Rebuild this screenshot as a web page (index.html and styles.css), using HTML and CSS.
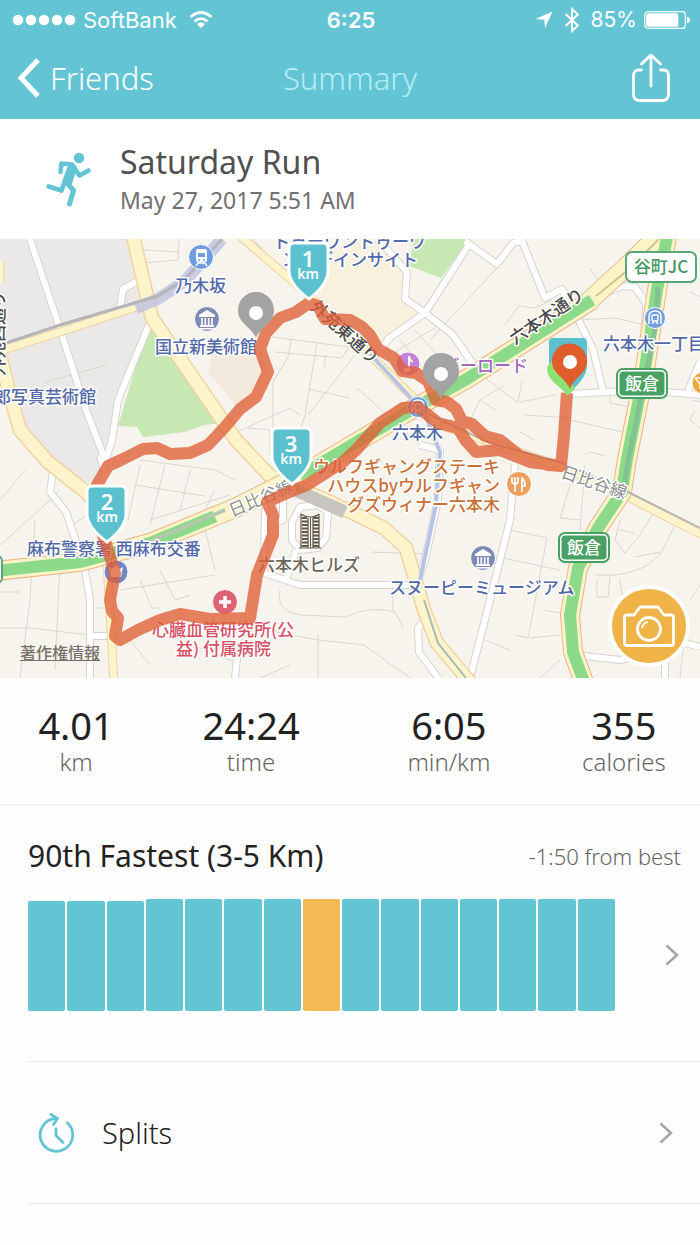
FILE: index.html
```html
<!DOCTYPE html>
<html lang="en">
<head>
    <meta charset="UTF-8">
    <meta name="viewport" content="width=device-width, initial-scale=1.0">
    <title>Summary - Saturday Run</title>
    <link rel="stylesheet" href="styles.css">
</head>
<body>
    <header>
        <div class="status-bar">
            <div class="status-left">
                <svg width="64" height="12" viewBox="0 0 64 12" fill="#fff">
                    <circle cx="6" cy="6" r="5.3"/><circle cx="19" cy="6" r="5.3"/><circle cx="32" cy="6" r="5.3"/><circle cx="45" cy="6" r="5.3"/><circle cx="58" cy="6" r="5.3"/>
                </svg>
                <span>SoftBank</span>
                <svg class="wifi" width="24" height="18" viewBox="0 0 24 18" fill="none" stroke="#fff" stroke-width="2.8">
                    <path d="M1.5 6 Q12 -3 22.5 6"/>
                    <path d="M5.5 10.5 Q12 4.8 18.5 10.5"/>
                    <path d="M8 13 Q12 9.6 16 13 L12 17.2 Z" fill="#fff" stroke="none"/>
                </svg>
            </div>
            <div class="clock">6:25</div>
            <div class="status-right">
                <svg width="18" height="18" viewBox="0 0 18 18" fill="#fff"><path d="M17.5 0.5 L10 17 L9.3 8.7 L0.5 8 Z"/></svg>
                <svg class="bluetooth" width="16" height="26" viewBox="0 0 16 26" fill="none" stroke="#fff" stroke-width="2"><path d="M1.5 7 L14 18.5 L8 24 V2 L14 7.5 L1.5 19"/></svg>
                <span>85%</span>
                <svg width="46" height="18" viewBox="0 0 46 18">
                    <rect x="0.7" y="0.7" width="40.6" height="16.6" rx="3" fill="none" stroke="#fff" stroke-width="1.2"/>
                    <rect x="2.2" y="2.2" width="32" height="13.6" rx="1.5" fill="#fff"/>
                    <path d="M43 5.8 Q46 6.5 46 9 Q46 11.5 43 12.2 Z" fill="#fff"/>
                </svg>
            </div>
        </div>
        <nav class="nav-bar">
            <a class="back" href="#friends">
                <svg width="26" height="40" viewBox="0 0 26 40" fill="none" stroke="#fff" stroke-width="5"><path d="M24 2 L7 20 L24 38"/></svg>
                Friends
            </a>
            <h1>Summary</h1>
            <button class="share" type="button" aria-label="Share">
                <svg width="38" height="50" viewBox="0 0 38 50" fill="none" stroke="#fff" stroke-width="2.8" stroke-linecap="round" stroke-linejoin="round">
                    <path d="M9.5 17 H7 Q1.5 17 1.5 22.5 V41 Q1.5 47.5 8 47.5 H30 Q36.5 47.5 36.5 41 V22.5 Q36.5 17 31 17 H28.5"/>
                    <path d="M19 33 V2.5 M9.5 11 L19 2 L28.5 11"/>
                </svg>
            </button>
        </nav>
    </header>

    <main>
        <section class="run-title">
            <svg width="46" height="56" viewBox="0 0 46 56" fill="none" stroke="#63c5d4" stroke-linecap="round" stroke-linejoin="round">
                <circle cx="33" cy="6" r="5.2" fill="#63c5d4" stroke="none"/>
                <path d="M25 14 L28 16 L23 31 L19 30 Z" fill="#63c5d4" stroke-width="6"/>
                <path d="M14.5 20 L15.5 11.5 L26 12.5 L33.5 23.5 L42.5 18.5" stroke-width="4.6"/>
                <path d="M19 29 L15.5 38.5 L2.8 34.5" stroke-width="4.8"/>
                <path d="M21 31 L27.5 38.5 L23.5 52" stroke-width="5"/>
            </svg>
            <div>
                <h2>Saturday Run</h2>
                <p>May 27, 2017 5:51 AM</p>
            </div>
        </section>

        <section class="map">
            <svg class="map-canvas" viewBox="0 239 700 439">
                <rect y="239" width="700" height="439" fill="#f7f4ee"/>
                <!-- areas -->
                <path d="M0 239 H130 L152 318 L118 400 L110 455 L96 488 L60 464 L22 430 L0 345 Z" fill="#ebe9e8"/>
                <path d="M148 325 L154 322 L222 423 L205 425 L185 432 L143 437 L137 427 L118 426 Z" fill="#c8e8b3"/>
                <path d="M212 352 L262 352 L268 375 L240 410 L208 372 Z" fill="#f4e9dd"/>
                <path d="M318 300 L332 252 L360 239 H380 L407 268 L405 300 L422 314 L386 342 Z" fill="#f7f1dd"/>
                <path d="M414 239 H470 L441 278 L409 266 Z" fill="#c8e8b3"/>
                <!-- minor streets -->
                <path class="street" d="M43 383 L106 365 M143 250 L179 252 M143 263 L178 260 L179 239 M272 337 L349 347 L342 358 L275 352 M291 340 L288 357 L273 382 V440 M317 343 L305 415 L298 436 M325 355 V368 M230 435 L290 408 L300 415 M248 428 L270 430 V455 M308 389 L350 398 M357 388 L420 445 M355 355 L308 415 M400 340 L425 370 M415 330 L440 358 M395 352 L435 328"/>
                <path class="street" d="M140 460 L215 470 L235 480 M135 485 L205 496 M140 465 L128 520 M165 465 L150 525 M190 470 L180 510 M215 490 L200 520 M0 500 L25 470 M0 545 L45 505 L60 490 M35 520 L30 600 L20 678 M60 560 L55 670 M0 628 L30 628 L90 635 M0 592 L20 592 M72 525 L110 500 M120 590 L215 575 M140 580 L152 608 L160 608 M160 570 L175 600 L190 595 M150 520 L230 495 M205 530 L215 570 M180 640 L235 662 M130 640 L150 665 M95 608 H110"/>
                <path class="street" d="M280 590 Q275 610 300 615 L345 617 Q370 605 395 612 L403 627 M393 595 V612 M255 628 L318 640 L364 645 L410 678 M318 635 V678 M290 665 L260 678 M372 552 L425 554"/>
                <path class="street" d="M430 340 L497 268 M465 430 L480 400 L505 385 M475 370 L518 403 L522 380 M480 400 L495 410 M520 402 L555 395 M525 415 L570 418 M570 420 L640 436 M520 432 L535 440 M505 325 L519 306 L535 308 L552 300 M590 268 L598 280 M578 320 L615 318 L645 325 M610 395 V403 L645 410 M585 455 L590 452 L605 456 M690 292 L700 297 M692 400 L700 402 M695 410 L690 420 L700 428"/>
                <path class="street" d="M510 530 L547 538 L528 638 L515 635 M503 558 L560 570 M543 610 L560 613 M575 470 L560 518 L580 520 M585 465 L580 530 M620 520 L615 540 L625 553 L640 535 L655 510 M620 530 L635 533 M595 575 L615 575 Q655 570 665 545 L675 525 M597 580 V597 H608 L610 577 M620 580 L622 595 M635 557 L660 552 M530 638 L560 635 M485 640 L510 650 M690 600 L700 585 M685 630 L680 678 M540 678 L560 660 M650 660 L630 655"/>
                <!-- white roads -->
                <g class="road-edge">
                    <path id="w1" d="M30 239 L62 335 L86 410 L106 462 M150 322 L118 400 L112 440 L105 462 M138 281 L123 289 L120 309"/>
                    <path id="w2" d="M53 472 L50 492 L66 512 L84 565 L90 600 V678 M91 636 H110 M100 455 L104 470 M247 239 L262 254"/>
                    <path id="w3" d="M378 239 L407 272 L405 299 L425 313 L470 243 M425 313 L388 339 L380 352 M425 313 L452 334 L472 362"/>
                    <path id="w4" d="M465 241 L497 264 L513 243 L522 241 L545 298 L562 289 L578 319 L593 349 L603 391 M570 394 L645 390 L700 395 M600 295 L622 286 L635 287 L646 303 L644 360 M688 391 L700 362 M460 345 L470 360"/>
                    <path id="w5" d="M265 505 L264 573 L300 585 H420 M283 500 V520 L276 522 M292 522 L300 507 L318 505 L328 512 L326 538 L318 548 L300 550 L292 540 Z M296 550 L286 580"/>
                    <path id="w6" d="M515 465 L510 520 L490 600 L470 678 M440 448 L438 500 L425 560 L418 580 M423 622 L418 628 L419 652 L438 678 M575 655 L620 660 L645 654 M665 662 V678 M685 643 L700 647 M420 445 L440 450 M240 630 L235 678"/>
                </g>
                <g class="road-fill">
                    <use href="#w1"/><use href="#w2"/><use href="#w3"/><use href="#w4"/><use href="#w5"/><use href="#w6"/>
                </g>
                <!-- yellow roads -->
                <g class="avenue-edge">
                    <path id="y1" d="M133 236 L152 318 L236 440 L270 476 L330 502 L384 528 L406 548 L424 610 L437 643 L470 682 M-4 340 L10 395 L20 430 L48 462 L86 492 L100 508"/>
                </g>
                <g class="lane-edge">
                    <path id="y2" d="M-4 352 L60 332 L148 303 M240 236 L310 296 L424 408 L440 425 L560 466 L630 498 L704 536 M100 508 L106 545 L114 682 M0 262 V282"/>
                </g>
                <g class="avenue-fill"><use href="#y1"/></g>
                <g class="lane-fill"><use href="#y2"/></g>
                <!-- expressways -->
                <g fill="none" stroke="#edb487" stroke-width="20">
                    <path id="g1" d="M-4 571 L80 562 L150 543 L235 508 L310 470 L404 414 L465 380 L592 300"/>
                    <path id="g2" d="M668 232 L657 290 L645 369 L627 459 L622 492 L598 528 L578 568 L570 615 L573 652 L584 682"/>
                    <path id="g3" d="M588 302 L625 268 L662 232"/>
                </g>
                <g fill="none" stroke="#fbf4c9" stroke-width="18"><use href="#g1"/><use href="#g2"/><use href="#g3"/></g>
                <g fill="none" stroke="#8dd98a" stroke-width="12"><use href="#g1"/><use href="#g2"/></g>
                <path d="M596 296 L628 270 L664 234" fill="none" stroke="#c9c88c" stroke-width="2"/>
                <path d="M215 517 L300 476" stroke="#fbf4c9" stroke-width="17"/>
                <path d="M130 550 L225 510" stroke="#b3c9ae" stroke-width="4"/>
                <!-- rail lines -->
                <path d="M136 308 L158 299 L184 282 L222 239" fill="none" stroke="#b9bce0" stroke-width="12" opacity="0.75"/>
                <path d="M0 345 L60 325 L158 296 L184 280 L222 239" fill="none" stroke="#b5b5b8" stroke-width="3"/>
                <path d="M370 354 L424 412 L440 452 L436 505 L420 580" fill="none" stroke="#b4c3e6" stroke-width="4"/>
                <path d="M293 489 L345 512" stroke="#c8c5c0" stroke-width="13"/>
                <path d="M424 412 L490 443 L560 462 L630 493 L704 530" fill="none" stroke="#b5b5b5" stroke-width="2"/>
                <path d="M424 600 L438 643 L466 678" fill="none" stroke="#a9b8b5" stroke-width="2"/>
                <path d="M658 287 L655 330 L628 462 L624 488" fill="none" stroke="#78aa9b" stroke-width="5" opacity="0.5"/>

                <!-- place labels -->
                <g class="label blue">
                    <text x="273" y="248">トゥーワントゥーワ</text>
                    <text x="282" y="266">ン・デインサイト</text>
                    <text x="175" y="292">乃木坂</text>
                    <text x="155" y="353">国立新美術館</text>
                    <text x="-6" y="403">郎写真芸術館</text>
                    <text x="27" y="555">麻布警察署 西麻布交番</text>
                    <text x="392" y="439">六本木</text>
                    <text x="603" y="350">六本木一丁目</text>
                    <text x="389" y="594">スヌーピーミュージアム</text>
                </g>
                <text class="label violet" x="426" y="372">アビーロード</text>
                <g class="label orange">
                    <text x="500" y="473" text-anchor="end">ウルフギャングステーキ</text>
                    <text x="500" y="492" text-anchor="end">ハウスbyウルフギャン</text>
                    <text x="500" y="511" text-anchor="end">グズウィナー六本木</text>
                </g>
                <g class="label red">
                    <text x="152" y="636">心臓血管研究所(公</text>
                    <text x="176" y="655">益) 付属病院</text>
                </g>
                <text class="label brown" x="258" y="571">六本木ヒルズ</text>
                <g class="label street-name">
                    <text transform="translate(309 308) rotate(42)">外苑東通り</text>
                    <text transform="translate(515 345) rotate(-34)">六本木通り</text>
                    <text transform="translate(4 376) rotate(-90)">外苑西通り</text>
                </g>
                <g class="label rail-name">
                    <text transform="translate(232 517) rotate(-23)">日比谷線</text>
                    <text transform="translate(560 477) rotate(19)">日比谷線</text>
                </g>

                <!-- place icons -->
                <g stroke="#fff" stroke-width="1">
                    <circle cx="201" cy="257" r="12.5" fill="#709de0"/>
                    <circle cx="207" cy="319" r="12.5" fill="#7f8bb5"/>
                    <circle cx="483" cy="558" r="12.5" fill="#7f8bb5"/>
                    <circle cx="655" cy="318" r="10.5" fill="#709de0"/>
                    <circle cx="418" cy="407" r="10.5" fill="#709de0"/>
                    <circle cx="408" cy="364" r="12" fill="#c482d4"/>
                    <circle cx="116" cy="572" r="12" fill="#7187c2"/>
                    <circle cx="519" cy="484" r="12.5" fill="#ed9f5d"/>
                    <circle cx="225" cy="602" r="12.5" fill="#dc6474"/>
                    <circle cx="703" cy="383" r="11" fill="#eda63f"/>
                </g>
                <rect x="196" y="249" width="11" height="13" rx="2" fill="#fff"/>
                <path d="M196 266 L198 263 H205 L207 266" fill="none" stroke="#fff" stroke-width="1.5"/>
                <path d="M198 253 H205 V257 H198 Z" fill="#709de0"/>
                <circle cx="199" cy="260" r="1" fill="#709de0"/><circle cx="204" cy="260" r="1" fill="#709de0"/>
                <g id="museum" fill="#fff"><path d="M199 315 L207 310 L215 315 V317 H199 Z M200 325 H214 V327 H200 Z M198.5 328 H215.5 V329.5 H198.5 Z"/><path d="M202 318 V325 M205.3 318 V325 M208.7 318 V325 M212 318 V325" stroke="#fff" stroke-width="1.6"/></g>
                <use href="#museum" x="276" y="239"/>
                <g id="metro" fill="none" stroke="#fff" stroke-width="1.5"><path d="M649 324 V317 Q649 311 655 311 Q661 311 661 317 V324"/><rect x="652" y="315" width="6" height="6" rx="1"/><path d="M652 324 L654 321.5 M658 324 L656 321.5"/></g>
                <use href="#metro" x="-237" y="89"/>
                <path d="M409 370 V356 Q410 361 413 362" fill="none" stroke="#fff" stroke-width="1.8"/><ellipse cx="406.5" cy="370" rx="3" ry="2.3" fill="#fff"/>
                <path d="M109 567 L112 569 L116 565 L120 569 L123 567 L121 577 H111 Z" fill="#fff"/>
                <path d="M512 477 V481 Q512 484 515 484 Q518 484 518 481 V477 M515 477 V492 M522 492 V478 Q525 480 525 486 H522" fill="none" stroke="#fff" stroke-width="1.7"/>
                <path d="M225 596 V608 M219 602 H231" stroke="#fff" stroke-width="3.5"/>
                <path d="M695 378 L700 384 V389 M695 378 H700" stroke="#fff" stroke-width="1.5" fill="none"/>
                <!-- tower -->
                <g stroke="#5e594a" fill="none">
                    <path d="M301 514 Q305 517 310 517 Q316 517 319 514 M301 514 V548 M319 514 V548 M308 518 V548 M313 518 V548 M299 548 H321" stroke-width="1.2"/>
                    <path d="M302 518 H307 M302 521.5 H308 M302 525 H308 M302 528.5 H308 M302 532 H308 M302 535.5 H308 M302 539 H308 M302 542.5 H308 M302 546 H308 M313 518 H319 M313 521.5 H319 M313 525 H319 M313 528.5 H319 M313 532 H319 M313 535.5 H319 M313 539 H319 M313 542.5 H319 M313 546 H319" stroke-width="1.8"/>
                    <path d="M310.5 518 V548" stroke-width="1"/>
                </g>

                <!-- road signs -->
                <rect x="626" y="252" width="70" height="30" rx="6" fill="#fff" stroke="#5aa577" stroke-width="2"/>
                <text class="sign green-text" x="661" y="273" text-anchor="middle">谷町JC</text>
                <g id="exit">
                    <rect x="617" y="369" width="50" height="29" rx="6" fill="#fff" stroke="#48a163" stroke-width="2"/>
                    <rect x="619.5" y="371.5" width="45" height="24" rx="4" fill="#48a163"/>
                    <text class="sign" x="642" y="390" text-anchor="middle">飯倉</text>
                </g>
                <use href="#exit" x="-58" y="164"/>
                <rect x="-20" y="556" width="22" height="27" rx="5" fill="#fff" stroke="#5aa577" stroke-width="2"/>

                <!-- run route -->
                <path class="route" d="M567 393 L564 435 L561 466 L548 465 L520 456 L500 440 L485 436 L472 424 L462 421 L456 409 L447 402 L436 400 L428 381 L416 373 L402 371 L394 358 L378 349 L370 335 L362 327 L350 320 L325 319 L318 306 L309 303 L296 312 L280 318 L266 333 L260 349 L268 372 L256 397 L240 409 L225 427 L208 445 L190 453 L170 454 L157 448 L143 449 L123 459 L108 466 L97 485 L98 520 L108 550 L115 573 L110 600 L112 611 L118 618 L115 636 L120 640 L138 630 L160 620 L180 614 L210 619 L250 618 L257 575 L273 535 L273 515 L267 502 L287 493 L307 485 L343 462 L357 449 L380 423 L403 408 L418 407 L438 423 L458 428 L466 441 L476 452 L500 450 L530 462 L561 466"/>

                <!-- stop pins -->
                <g id="stop"><path d="M256 338 C251 326 238 324 238 310 A18 18 0 0 1 274 310 C274 324 261 326 256 338 Z" fill="#a3a3a3"/><circle cx="256" cy="313" r="7" fill="#fff"/></g>
                <use href="#stop" x="185" y="61"/>
                <!-- kilometer pins -->
                <g fill="#5cc1cf" stroke="#fff" stroke-width="3">
                    <path id="shield" d="M294 243 H323 Q328 243 328 248 V272 Q327 285 309 299 Q290 285 289 272 V248 Q289 243 294 243 Z"/>
                    <use href="#shield" x="-202" y="243"/>
                    <use href="#shield" x="-17" y="185"/>
                </g>
                <g class="km-number">
                    <text x="308" y="267">1</text><text x="107" y="510">2</text><text x="291" y="452">3</text>
                </g>
                <g class="km-unit">
                    <text x="308" y="279">km</text><text x="107" y="522">km</text><text x="291" y="464">km</text>
                </g>
                <!-- start and finish -->
                <path d="M553 338 H583 Q587 338 587 342 V366 Q586 380 567 394 Q550 380 549 366 V342 Q549 338 553 338 Z" fill="#5cc1cf"/>
                <path d="M567 396 C562 385 547 383 547 367 L556 356 L575 389 Z" fill="#8de171"/>
                <path d="M570 389 C565 377 552 374 552 361 A17.5 17.5 0 0 1 587 361 C587 374 574 377 570 389 Z" fill="#e05c2b"/>
                <circle cx="570" cy="362" r="7" fill="#fff"/>
            </svg>
            <a class="map-legal" href="#legal">著作権情報</a>
            <button class="camera" type="button" aria-label="Add photo">
                <svg width="52" height="44" viewBox="0 0 52 44" fill="none" stroke="#fff" stroke-width="2.8" stroke-linejoin="round">
                    <path d="M4 11 H11 L17 3 H35 L41 11 H48 Q50.5 11 50.5 13.5 V39 Q50.5 41.5 48 41.5 H4 Q1.5 41.5 1.5 39 V13.5 Q1.5 11 4 11 Z"/>
                    <circle cx="26" cy="25" r="11.5"/>
                    <path d="M19 24 Q20 18.5 25 18" stroke-width="2"/>
                </svg>
            </button>
        </section>

        <section class="stats">
            <div class="stat"><strong>4.01</strong><span>km</span></div>
            <div class="stat"><strong>24:24</strong><span>time</span></div>
            <div class="stat"><strong>6:05</strong><span>min/km</span></div>
            <div class="stat"><strong>355</strong><span>calories</span></div>
        </section>

        <section class="ranking">
            <div class="ranking-head">
                <h2>90th Fastest (3-5 Km)</h2>
                <span>-1:50 from best</span>
            </div>
            <a class="ranking-chart" href="#ranking" aria-label="See all runs">
                <div class="bars">
                    <i class="bar short"></i><i class="bar short"></i><i class="bar short"></i><i class="bar"></i><i class="bar"></i>
                    <i class="bar"></i><i class="bar"></i><i class="bar current"></i><i class="bar"></i><i class="bar"></i>
                    <i class="bar"></i><i class="bar"></i><i class="bar"></i><i class="bar"></i><i class="bar"></i>
                </div>
                <svg width="14" height="22" viewBox="0 0 14 22" fill="none" stroke="#a5a5a5" stroke-width="2.5"><path d="M1.5 1.5 L12 11 L1.5 20.5"/></svg>
            </a>
        </section>

        <a class="row" href="#splits">
            <svg width="36" height="40" viewBox="0 0 36 40" fill="none" stroke="#63c5d4" stroke-width="2.8" stroke-linecap="round" stroke-linejoin="round">
                <path d="M29.5 10 A16.3 16.3 0 1 1 17 5.7"/>
                <path d="M13 1.5 L19.5 5.5 L15.5 11.5"/>
                <path d="M18 16 V22.5 L25 29.5"/>
            </svg>
            <span>Splits</span>
            <svg width="14" height="22" viewBox="0 0 14 22" fill="none" stroke="#a5a5a5" stroke-width="2.5"><path d="M1.5 1.5 L12 11 L1.5 20.5"/></svg>
        </a>
    </main>
</body>
</html>
```
FILE: styles.css
```css
* {
    box-sizing: border-box;
}

body {
    margin: 0;
    font-family: "Noto Sans", "Open Sans", sans-serif;
    background-color: #fefefe;
    color: #222;
}

h1, h2, p {
    margin: 0;
    font-weight: 400;
}

a {
    color: inherit;
    text-decoration: none;
}

button {
    border: none;
    padding: 0;
    background: none;
    cursor: pointer;
}

svg {
    display: block;
    flex: none;
}

header {
    background-color: #63c5d4;
    color: white;
}

.status-bar {
    display: grid;
    grid-template-columns: 1fr auto 1fr;
    align-items: center;
    height: 39px;
    padding: 0 10px 0 12px;
    font-family: Inter, "Liberation Sans", sans-serif;
    font-size: 22px;
}

.status-left,
.status-right {
    display: flex;
    align-items: center;
    gap: 7px;
}

.status-left .wifi {
    margin-left: 5px;
}

.status-right {
    justify-content: flex-end;
}

.status-right span {
    font-size: 21px;
}

.status-right .bluetooth {
    margin: 0 4px;
}

.clock {
    font-weight: 600;
}

.nav-bar {
    display: grid;
    grid-template-columns: 1fr auto 1fr;
    align-items: center;
    height: 80px;
    padding: 0 14px 2px;
    font-size: 31px;
    font-weight: 300;
}

.back {
    display: flex;
    align-items: center;
    gap: 10px;
}

.nav-bar h1 {
    font-size: 31px;
    font-weight: 300;
    color: #b4edf5;
}

.share {
    justify-self: end;
    margin-right: 16px;
}

.run-title {
    display: flex;
    align-items: center;
    gap: 28px;
    height: 120px;
    padding: 2px 46px 0;
    background-color: white;
}

.run-title h2 {
    font-size: 32px;
    line-height: 40px;
    color: #505050;
}

.run-title p {
    font-size: 23px;
    line-height: 36px;
    color: #707070;
}

.map {
    position: relative;
}

.map-canvas {
    width: 100%;
    height: auto;
}

.street {
    fill: none;
    stroke: #d9d6d0;
    stroke-width: 1;
}

.road-edge,
.road-fill,
.avenue-edge,
.avenue-fill,
.lane-edge,
.lane-fill {
    fill: none;
    stroke-linejoin: round;
}

.road-edge {
    stroke: #d6d4d2;
    stroke-width: 8;
}

.road-fill {
    stroke: white;
    stroke-width: 6;
}

.avenue-edge {
    stroke: #f2d2a2;
    stroke-width: 15;
}

.avenue-fill {
    stroke: #fdf4cb;
    stroke-width: 12;
}

.lane-edge {
    stroke: #f2d2a2;
    stroke-width: 9;
}

.lane-fill {
    stroke: #fdf4cb;
    stroke-width: 7;
}

.label {
    font-family: "Noto Sans CJK JP", sans-serif;
    font-size: 17px;
    font-weight: 500;
    paint-order: stroke;
    stroke: white;
    stroke-width: 3px;
    stroke-linejoin: round;
}

.blue {
    fill: #5369a8;
}

.violet {
    fill: #a366b8;
}

.orange {
    fill: #c97036;
}

.red {
    fill: #d65065;
}

.brown {
    fill: #6b6658;
}

.street-name {
    fill: #4a4a4a;
}

.rail-name {
    font-weight: 400;
    fill: #8c8c8c;
}

.sign {
    font-family: "Noto Sans CJK JP", sans-serif;
    font-size: 17px;
    font-weight: 500;
    fill: white;
}

.green-text {
    fill: #43965f;
}

.route {
    fill: none;
    stroke: #df5f36;
    stroke-width: 12;
    stroke-linejoin: round;
    opacity: 0.78;
}

.km-number,
.km-unit {
    fill: white;
    font-weight: 600;
    text-anchor: middle;
}

.km-number {
    font-size: 22px;
}

.km-unit {
    font-size: 14px;
}

.map-legal {
    position: absolute;
    left: 20px;
    bottom: 14px;
    font-family: "Noto Sans CJK JP", sans-serif;
    font-size: 16px;
    font-weight: 500;
    line-height: 24px;
    color: #77736c;
    text-decoration: underline;
}

.camera {
    position: absolute;
    right: 10px;
    bottom: 11px;
    display: grid;
    place-items: center;
    width: 82px;
    height: 82px;
    border: 4px solid white;
    border-radius: 50%;
    background-color: #efb347;
}

.stats {
    display: grid;
    grid-template-columns: 10fr 13fr 13fr 10fr;
    padding: 24px 0 29px;
    border-bottom: 2px solid #f2f2f2;
    text-align: center;
}

.stat strong {
    display: block;
    font-size: 38px;
    font-weight: 400;
    line-height: 46px;
}

.stat span {
    display: block;
    font-size: 24px;
    font-weight: 300;
    line-height: 27px;
    color: #666;
}

.ranking {
    margin-left: 28px;
    padding: 30px 19px 50px 0;
    border-bottom: 1px solid #e8e8e8;
}

.ranking-head {
    display: flex;
    justify-content: space-between;
    align-items: center;
    line-height: 40px;
}

.ranking-head h2 {
    font-size: 30px;
}

.ranking-head span {
    font-size: 22px;
    font-weight: 300;
    color: #666;
}

.ranking-chart {
    display: flex;
    align-items: center;
    gap: 50px;
    margin-top: 23px;
    padding-right: 2px;
}

.bars {
    display: flex;
    flex: 1;
    align-items: flex-end;
    gap: 2px;
    height: 112px;
}

.bar {
    flex: 1;
    height: 100%;
    border-radius: 2px;
    background-color: #63c5d4;
}

.bar.short {
    height: 110px;
}

.bar.current {
    background-color: #f4b955;
}

.row {
    display: flex;
    align-items: center;
    height: 142px;
    margin-left: 28px;
    padding: 0 27px 0 10px;
    border-bottom: 1px solid #e8e8e8;
    font-size: 29px;
    font-weight: 300;
}

.row span {
    flex: 1;
    margin-left: 28px;
}
```
